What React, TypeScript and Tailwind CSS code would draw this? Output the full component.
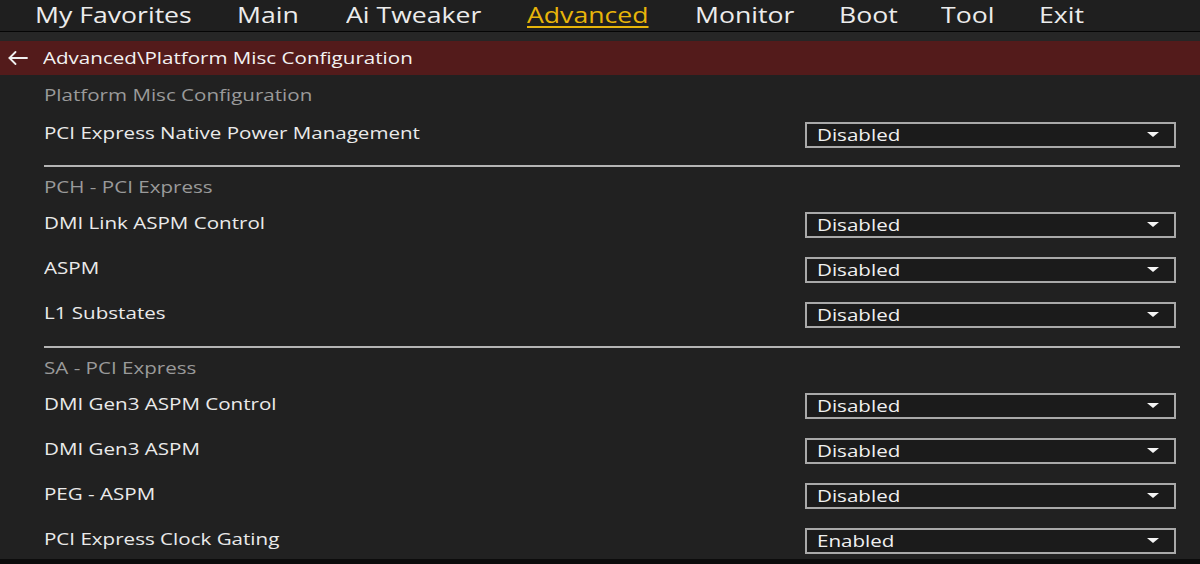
const tabs: { name: string; gap: string }[] = [
  { name: 'My Favorites', gap: 'mr-[72px]' },
  { name: 'Main', gap: 'mr-[58px]' },
  { name: 'Ai Tweaker', gap: 'mr-[70px]' },
  { name: 'Advanced', gap: 'mr-[67px]' },
  { name: 'Monitor', gap: 'mr-[62px]' },
  { name: 'Boot', gap: 'mr-[53px]' },
  { name: 'Tool', gap: 'mr-[54px]' },
  { name: 'Exit', gap: 'mr-0' },
];

type Row = { label: string; value: string };

const sections: { title: string; rows: Row[] }[] = [
  {
    title: 'Platform Misc Configuration',
    rows: [{ label: 'PCI Express Native Power Management', value: 'Disabled' }],
  },
  {
    title: 'PCH - PCI Express',
    rows: [
      { label: 'DMI Link ASPM Control', value: 'Disabled' },
      { label: 'ASPM', value: 'Disabled' },
      { label: 'L1 Substates', value: 'Disabled' },
    ],
  },
  {
    title: 'SA - PCI Express',
    rows: [
      { label: 'DMI Gen3 ASPM Control', value: 'Disabled' },
      { label: 'DMI Gen3 ASPM', value: 'Disabled' },
      { label: 'PEG - ASPM', value: 'Disabled' },
      { label: 'PCI Express Clock Gating', value: 'Enabled' },
    ],
  },
];

// the BIOS screen text is rendered wide, so stretch it horizontally
const wide = 'inline-block origin-left scale-x-[1.21]';

function Dropdown({ value }: { value: string }) {
  return (
    <div className="w-[371px] h-[26px] border-2 border-[#a9a9a9] bg-[#1b1b1b] flex items-center justify-between pl-[10px] pr-[15px]">
      <span className={`${wide} text-[17px] font-medium text-[#f0f0f0] leading-[22px]`}>{value}</span>
      <svg width="12" height="5" viewBox="0 0 12 5">
        <polygon points="0,0 12,0 6,5" fill="#f5f5f5" />
      </svg>
    </div>
  );
}

export default function App() {
  return (
    <div
      className="w-[1200px] h-[564px] overflow-hidden bg-[#212121] flex flex-col"
      style={{ fontFamily: '"Open Sans", "Noto Sans", sans-serif' }}
    >
      {/* Top tabs */}
      <div className="h-[32px] shrink-0 bg-[#1f1f1f] border-b border-[#050505] flex items-start pl-[35px]">
        {tabs.map((t) => (
          <div key={t.name} className={`${t.gap} -mt-[1px]`}>
            <span
              className={
                t.name === 'Advanced'
                  ? `${wide} text-[22px] leading-[30px] text-[#e8b50a] underline decoration-2 underline-offset-[3px]`
                  : `${wide} text-[22px] leading-[30px] text-[#ececec]`
              }
            >
              {t.name}
            </span>
          </div>
        ))}
      </div>
      <div className="h-[9px] shrink-0 bg-[#262626]" />

      {/* Breadcrumb */}
      <div className="h-[34px] shrink-0 bg-[#531b1b] flex items-center pl-[8px] gap-[15px]">
        <svg width="20" height="14" viewBox="0 0 20 14" fill="none" stroke="#f0f0f0" strokeWidth="1.8" strokeLinecap="round" strokeLinejoin="round">
          <path d="M19 7H1.5" />
          <path d="M7.5 1L1.5 7l6 6" />
        </svg>
        <span className={`${wide} text-[17px] font-medium text-[#f2f2f2]`}>Advanced\Platform Misc Configuration</span>
      </div>

      {/* Settings */}
      <div className="flex-1 overflow-hidden pl-[44px] pr-[20px]">
        {sections.map((s, i) => (
          <div key={s.title}>
            {i > 0 && <div className={i === 1 ? 'mt-[8px] h-[2px] bg-[#b4b4b4]' : 'mt-[9px] h-[2px] bg-[#b4b4b4]'} />}
            <div className={i === 0 ? 'h-[37px] pt-[3px] flex items-center' : 'h-[35px] pt-[5px] flex items-center'}>
              <span className={`${wide} text-[17px] font-medium text-[#9a9a9a]`}>{s.title}</span>
            </div>
            {s.rows.map((r) => (
              <div key={r.label} className="h-[45px] flex items-center justify-between pr-[4px]">
                <span className={`${wide} text-[17px] font-medium text-[#eaeaea] -mt-[3px]`}>{r.label}</span>
                <Dropdown value={r.value} />
              </div>
            ))}
          </div>
        ))}
      </div>
      <div className="h-[5px] shrink-0 bg-[#0c0c0c]" />
    </div>
  );
}
